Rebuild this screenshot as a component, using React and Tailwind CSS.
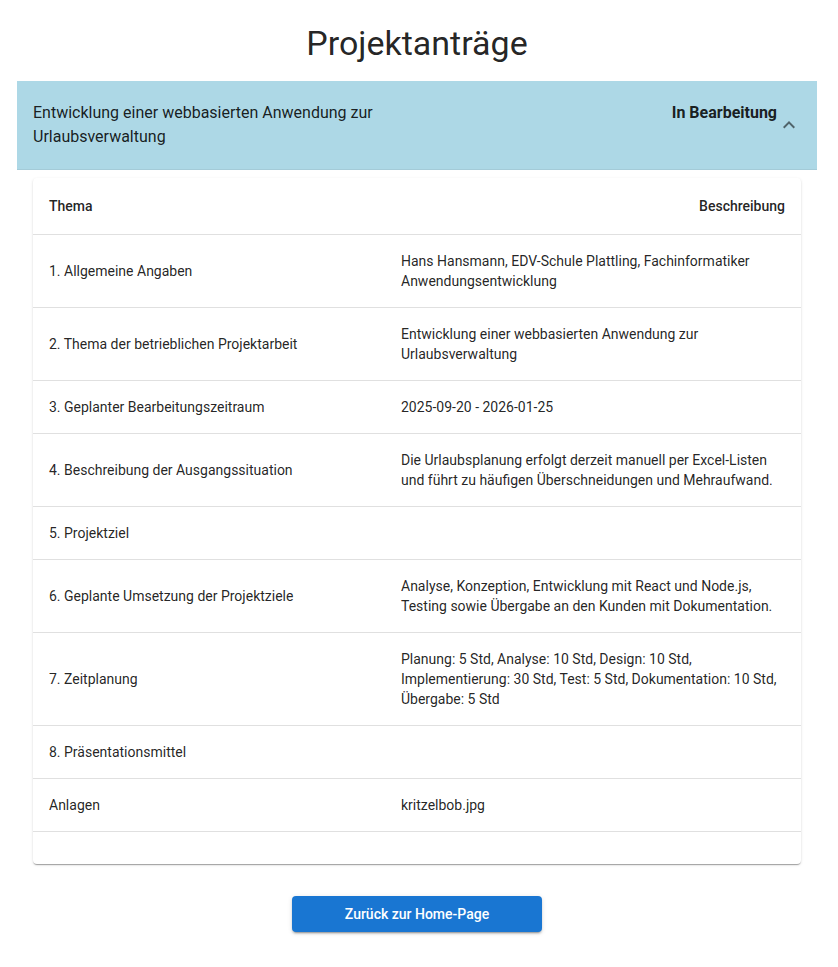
const rows = [
  ['1. Allgemeine Angaben', 'Hans Hansmann, EDV-Schule Plattling, Fachinformatiker Anwendungsentwicklung'],
  ['2. Thema der betrieblichen Projektarbeit', 'Entwicklung einer webbasierten Anwendung zur Urlaubsverwaltung'],
  ['3. Geplanter Bearbeitungszeitraum', '2025-09-20 - 2026-01-25'],
  ['4. Beschreibung der Ausgangssituation', 'Die Urlaubsplanung erfolgt derzeit manuell per Excel-Listen und führt zu häufigen Überschneidungen und Mehraufwand.'],
  ['5. Projektziel', ''],
  ['6. Geplante Umsetzung der Projektziele', 'Analyse, Konzeption, Entwicklung mit React und Node.js, Testing sowie Übergabe an den Kunden mit Dokumentation.'],
  ['7. Zeitplanung', 'Planung: 5 Std, Analyse: 10 Std, Design: 10 Std, Implementierung: 30 Std, Test: 5 Std, Dokumentation: 10 Std, Übergabe: 5 Std'],
  ['8. Präsentationsmittel', ''],
  ['Anlagen', 'kritzelbob.jpg'],
];

function ExpandLess() {
  return (
    <svg viewBox="0 0 24 24" className="w-6 h-6" fill="rgba(0,0,0,0.54)">
      <path d="m12 8-6 6 1.41 1.41L12 10.83l4.59 4.58L18 14z" />
    </svg>
  );
}

export default function App() {
  return (
    <div
      className="min-h-screen bg-white text-[rgba(0,0,0,0.87)] pt-[22px]"
      style={{ fontFamily: 'Roboto, "Liberation Sans", sans-serif' }}
    >
      <div className="ml-[17px] w-[800px]">
        <h1 className="text-center text-[34px] leading-[42px] font-normal mb-[17px]">Projektanträge</h1>

        <div className="bg-white">
          <div className="bg-[#add8e6] flex items-center px-4 border-b border-[#a4cbd8]">
            <div className="flex flex-1 justify-between items-start mt-5 mb-5">
              <div className="w-[50%] text-base leading-6">
                Entwicklung einer webbasierten Anwendung zur Urlaubsverwaltung
              </div>
              <div className="text-base leading-6 font-bold">In Bearbeitung</div>
            </div>
            <ExpandLess />
          </div>

          <div className="pt-2 px-4 pb-4">
            <div className="rounded bg-white shadow-[0_2px_1px_-1px_rgba(0,0,0,0.2),0_1px_1px_0_rgba(0,0,0,0.14),0_1px_3px_0_rgba(0,0,0,0.12)]">
              <div className="grid grid-cols-[352px_1fr] border-b border-[#e0e0e0] text-sm leading-6 font-medium">
                <div className="p-4">Thema</div>
                <div className="p-4 text-right">Beschreibung</div>
              </div>
              {rows.map(([k, v]) => (
                <div key={k} className="grid grid-cols-[352px_1fr] items-center border-b border-[#e0e0e0] text-sm leading-5">
                  <div className="p-4">{k}</div>
                  <div className="p-4">{v}</div>
                </div>
              ))}
              <div className="h-8" />
            </div>
          </div>
        </div>

        <div className="flex justify-center mt-4">
          <button className="w-[250px] h-9 rounded bg-[#1976d2] text-white text-sm font-medium leading-6 shadow-[0_3px_1px_-2px_rgba(0,0,0,0.2),0_2px_2px_0_rgba(0,0,0,0.14),0_1px_5px_0_rgba(0,0,0,0.12)]">
            Zurück zur Home-Page
          </button>
        </div>
      </div>
    </div>
  );
}
